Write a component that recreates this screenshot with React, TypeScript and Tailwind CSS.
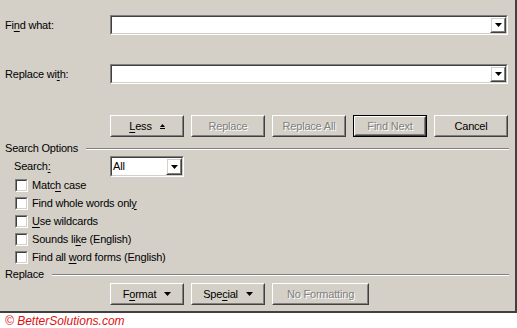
import React from 'react';

const FACE = 'bg-[#d4d0c8]';

// Win2000 raised 3D frame
const Raised: React.FC<{ className?: string; children?: React.ReactNode; def?: boolean }> = ({ className = '', children, def }) => {
  const inner = (
    <div className="h-full w-full border border-t-white border-l-white border-b-[#404040] border-r-[#404040]">
      <div className="h-full w-full flex items-center justify-center border border-t-[#d4d0c8] border-l-[#d4d0c8] border-b-[#808080] border-r-[#808080]">
        {children}
      </div>
    </div>
  );
  if (def) return <div className={`border border-black ${className}`}>{inner}</div>;
  return <div className={className}>{inner}</div>;
};

const DownTri = () => (
  <svg width="7" height="4" viewBox="0 0 7 4" className="block">
    <path d="M0 0h7L3.5 4z" fill="#000" />
  </svg>
);

const ComboArrow = () => (
  <Raised className="w-[16px] h-full">
    <DownTri />
  </Raised>
);

// sunken field with dropdown
const Combo: React.FC<{ className?: string; value?: string }> = ({ className = '', value }) => (
  <div className={`border border-t-[#808080] border-l-[#808080] border-b-white border-r-white ${className}`}>
    <div className="h-full flex border border-t-[#404040] border-l-[#404040] border-b-[#d4d0c8] border-r-[#d4d0c8] bg-white">
      <div className="flex-1 flex items-center pl-[1px]">{value}</div>
      <ComboArrow />
    </div>
  </div>
);

const Btn: React.FC<{ children: React.ReactNode; disabled?: boolean; def?: boolean; className?: string }> = ({ children, disabled, def, className = 'w-[74px]' }) => (
  <Raised className={`h-[22px] ${className}`} def={def}>
    <span className={disabled ? 'text-[#808080] [text-shadow:1px_1px_0_#fff]' : ''}>{children}</span>
  </Raised>
);

const U: React.FC<{ children: React.ReactNode }> = ({ children }) => <span className="underline underline-offset-[2px]">{children}</span>;

const Group: React.FC<{ title: string }> = ({ title }) => (
  <div className="flex items-center h-[13px] pl-[5px] pr-[6px]">
    <span>{title}</span>
    <div className="flex-1 ml-[8px] border-t border-t-[#808080] border-b border-b-white" />
  </div>
);

const Check: React.FC<{ children: React.ReactNode }> = ({ children }) => (
  <div className="flex items-center h-[18px] pl-[15px]">
    <div className="w-[13px] h-[13px] border border-t-[#808080] border-l-[#808080] border-b-white border-r-white">
      <div className="h-full border border-t-[#404040] border-l-[#404040] border-b-[#d4d0c8] border-r-[#d4d0c8] bg-white" />
    </div>
    <span className="ml-[4px]">{children}</span>
  </div>
);

export default function App() {
  return (
    <div className="w-[517px] h-[328px] bg-white text-black text-[11px] leading-[13px] tracking-[-0.2px] font-['Liberation_Sans',Arial,sans-serif]">
      <div className={`w-[517px] h-[313px] ${FACE} border-r-2 border-b-2 border-[#404040] flex flex-col`}>
        {/* Find / replace fields */}
        <div className="flex items-center h-[20px] mt-[15px] pl-[5px]">
          <span className="w-[105px]">Fi<U>n</U>d what:</span>
          <Combo className="w-[398px] h-full" />
        </div>
        <div className="flex items-center h-[20px] mt-[29px] pl-[5px]">
          <span className="w-[105px]">Replace wi<U>t</U>h:</span>
          <Combo className="w-[398px] h-full" />
        </div>

        {/* Action buttons */}
        <div className="flex gap-[7px] pl-[110px] mt-[31px]">
          <Btn>
            <span className="flex items-center gap-[8px]">
              <span><U>L</U>ess</span>
              <svg width="5" height="5" viewBox="0 0 5 5" className="block">
                <path d="M2.5 0L5 3H0z" fill="#000" />
                <rect x="0" y="4" width="5" height="1" fill="#000" />
              </svg>
            </span>
          </Btn>
          <Btn disabled>Replace</Btn>
          <Btn disabled>Replace All</Btn>
          <Btn disabled def>Find Next</Btn>
          <Btn>Cancel</Btn>
        </div>

        {/* Search options */}
        <div className="mt-[5px]">
          <Group title="Search Options" />
        </div>
        <div className="flex items-center h-[21px] mt-[1px] pl-[14px]">
          <span className="w-[96px]">Search<U>:</U></span>
          <Combo className="w-[74px] h-full" value="All" />
        </div>
        <div className="flex flex-col -mt-[1px]">
          <Check>Matc<U>h</U> case</Check>
          <Check>Find whole words onl<U>y</U></Check>
          <Check><U>U</U>se wildcards</Check>
          <Check>Sounds li<U>k</U>e (English)</Check>
          <Check>Find all <U>w</U>ord forms (English)</Check>
        </div>

        {/* Replace */}
        <div className="mt-[2px]">
          <Group title="Replace" />
        </div>
        <div className="flex gap-[7px] pl-[110px] mt-[2px]">
          <Btn>
            <span className="flex items-center gap-[8px]">
              <span>F<U>o</U>rmat</span>
              <DownTri />
            </span>
          </Btn>
          <Btn>
            <span className="flex items-center gap-[8px]">
              <span>Spe<U>c</U>ial</span>
              <DownTri />
            </span>
          </Btn>
          <Btn disabled className="w-[97px]">No Formatting</Btn>
        </div>
      </div>
      <div className="pl-[5px] pt-[2px] italic text-[12px] leading-[12px] tracking-normal text-[#e01010]">© BetterSolutions.com</div>
    </div>
  );
}
